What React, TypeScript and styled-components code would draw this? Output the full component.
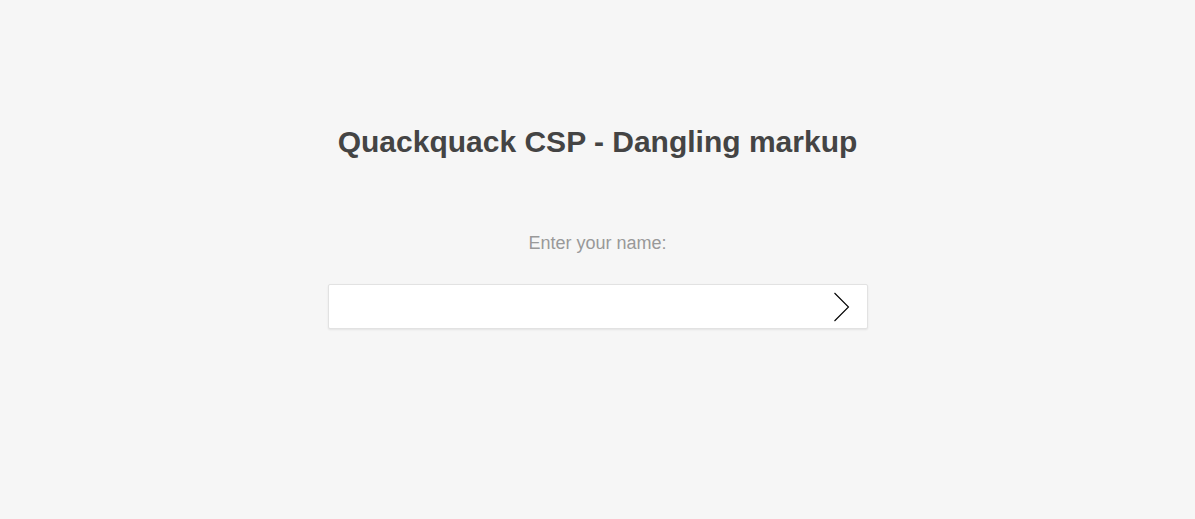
import React from "react";
import styled, { createGlobalStyle } from "styled-components";

const Global = createGlobalStyle`
  html, body { margin: 0; padding: 0; background: #f6f6f6; }
  body { font-family: "Liberation Sans", Arial, sans-serif; }
`;

const Page = styled.main`
  display: flex;
  flex-direction: column;
  align-items: center;
  padding-top: 125px;
  min-height: 519px;
  box-sizing: border-box;
`;

const Title = styled.h1`
  margin: 0;
  font-size: 30px;
  line-height: 34px;
  font-weight: bold;
  color: #444444;
`;

const Label = styled.label`
  margin-top: 73px;
  font-size: 18px;
  line-height: 22px;
  color: #999999;
`;

const Form = styled.form`
  margin-top: 30px;
  width: 540px;
  height: 45px;
  box-sizing: border-box;
  display: flex;
  align-items: center;
  background: #ffffff;
  border: 1px solid #e2e2e2;
  border-radius: 2px;
  box-shadow: 0 1px 2px rgba(0, 0, 0, 0.08);
`;

const Input = styled.input`
  flex: 1;
  height: 100%;
  border: none;
  outline: none;
  background: transparent;
  padding: 0 12px;
  font-size: 16px;
  font-family: inherit;
`;

const Submit = styled.button`
  width: 40px;
  height: 100%;
  border: none;
  background: transparent;
  padding: 0;
  margin-right: 16px;
  display: flex;
  align-items: center;
  justify-content: flex-end;
  cursor: pointer;
`;

export default function App() {
  return (
    <>
      <Global />
      <Page>
        <Title>Quackquack CSP - Dangling markup</Title>
        <Label htmlFor="name">Enter your name:</Label>
        <Form onSubmit={(e) => e.preventDefault()}>
          <Input id="name" type="text" />
          <Submit type="submit" aria-label="Submit">
            <svg width="18" height="30" viewBox="0 0 18 30">
              <polyline points="1.5,1 15.5,15 1.5,29" fill="none" stroke="#000" strokeWidth="1.1" />
            </svg>
          </Submit>
        </Form>
      </Page>
    </>
  );
}
